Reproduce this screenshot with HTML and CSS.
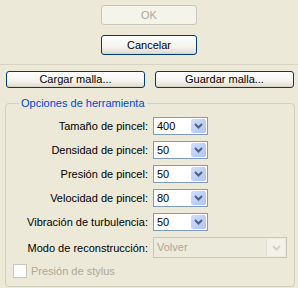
FILE: index.html
```html
<!DOCTYPE html>
<html>
<head>
<meta charset="utf-8">
<link rel="stylesheet" href="styles.css">
</head>
<body>
<div class="top">
  <button class="btn btn-disabled" disabled>OK</button>
  <button class="btn">Cancelar</button>
</div>
<div class="sep"></div>
<div class="mesh">
  <button class="btn btn-mesh">Cargar malla...</button>
  <button class="btn btn-mesh">Guardar malla...</button>
</div>
<fieldset class="group">
  <legend class="legend">Opciones de herramienta</legend>
  <div class="grid">
    <span class="lbl">Tamaño de pincel:</span>
    <div class="combo"><span class="val">400</span><span class="arrow"><svg width="9" height="6" viewBox="0 0 9 6"><path d="M1 1 L4.5 4.5 L8 1" fill="none" stroke="#4D6185" stroke-width="2"/></svg></span></div>
    <span class="lbl">Densidad de pincel:</span>
    <div class="combo"><span class="val">50</span><span class="arrow"><svg width="9" height="6" viewBox="0 0 9 6"><path d="M1 1 L4.5 4.5 L8 1" fill="none" stroke="#4D6185" stroke-width="2"/></svg></span></div>
    <span class="lbl">Presión de pincel:</span>
    <div class="combo"><span class="val">50</span><span class="arrow"><svg width="9" height="6" viewBox="0 0 9 6"><path d="M1 1 L4.5 4.5 L8 1" fill="none" stroke="#4D6185" stroke-width="2"/></svg></span></div>
    <span class="lbl">Velocidad de pincel:</span>
    <div class="combo"><span class="val">80</span><span class="arrow"><svg width="9" height="6" viewBox="0 0 9 6"><path d="M1 1 L4.5 4.5 L8 1" fill="none" stroke="#4D6185" stroke-width="2"/></svg></span></div>
    <span class="lbl">Vibración de turbulencia:</span>
    <div class="combo"><span class="val">50</span><span class="arrow"><svg width="9" height="6" viewBox="0 0 9 6"><path d="M1 1 L4.5 4.5 L8 1" fill="none" stroke="#4D6185" stroke-width="2"/></svg></span></div>
    <span class="lbl lbl-tall">Modo de reconstrucción:</span>
    <div class="combo combo-wide combo-disabled"><span class="val">Volver</span><span class="arrow"><svg width="9" height="6" viewBox="0 0 9 6"><path d="M1 1 L4.5 4.5 L8 1" fill="none" stroke="#D4D2C6" stroke-width="2"/></svg></span></div>
  </div>
  <div class="check">
    <span class="box"></span>
    <span class="check-lbl">Presión de stylus</span>
  </div>
</fieldset>
</body>
</html>
```
FILE: styles.css
```css
* { box-sizing: border-box; }
html, body {
  margin: 0;
  padding: 0;
}
body {
  width: 298px;
  height: 288px;
  overflow: hidden;
  background: #ECE9D8;
  font-family: "Liberation Sans", Arial, sans-serif;
  font-size: 11px;
  color: #000;
}
.top {
  display: flex;
  flex-direction: column;
  align-items: center;
  padding-top: 5px;
  gap: 10px;
}
.btn {
  font-family: "Liberation Sans", Arial, sans-serif;
  font-size: 11px;
  color: #000;
  border: 1px solid #003C74;
  border-radius: 3px;
  background: linear-gradient(#FFFFFF 0%, #F4F3EE 60%, #E4E1D6 90%, #D6D0C5 100%);
  padding: 0;
  margin: 0;
  line-height: 1;
}
.top .btn {
  width: 96px;
  height: 20px;
}
.btn-disabled {
  border-color: #C9C7BA;
  background: #F5F4EA;
  color: #ACA899;
}
.sep {
  margin-top: 9px;
  height: 1px;
  background: #D6D2C2;
}
.mesh {
  display: flex;
  gap: 10px;
  padding: 0 0 0 6px;
  margin-top: 6px;
}
.btn-mesh {
  width: 139px;
  height: 17px;
}
.group {
  margin: 9px 0 0 5px;
  width: 290px;
  height: 190px;
  border: 1px solid #D0D0BF;
  border-radius: 4px;
  padding: 7px 0 0 0;
}
.legend {
  margin-left: 13px;
  padding: 0 2px;
  color: #0046D5;
  line-height: 13px;
}
.grid {
  display: grid;
  grid-template-columns: 142px auto;
  grid-template-rows: repeat(5, 18px) 21px;
  column-gap: 5px;
  row-gap: 6px;
  justify-items: start;
  align-items: center;
}
.lbl {
  justify-self: end;
  white-space: nowrap;
}
.combo {
  width: 55px;
  height: 18px;
  border: 1px solid #7F9DB9;
  background: #fff;
  display: flex;
  align-items: stretch;
  justify-content: space-between;
  padding: 1px;
}
.val {
  padding-left: 2px;
  line-height: 14px;
}
.arrow {
  width: 15px;
  border-radius: 2px;
  background: linear-gradient(135deg, #D2DEFB 0%, #BCCEF8 60%, #B0C4F5 100%);
  display: flex;
  align-items: center;
  justify-content: center;
}
.combo-wide {
  width: 134px;
  height: 21px;
}
.combo-disabled {
  border-color: #C9C7BA;
  background: #EBEADB;
  color: #ACA899;
}
.combo-disabled .val {
  line-height: 17px;
}
.combo-disabled .arrow {
  width: 19px;
  border-radius: 0;
  background: #F3F2E8;
  border-left: 1px solid #E2E0D4;
}
.check {
  display: flex;
  align-items: center;
  gap: 4px;
  padding-left: 7px;
  margin-top: 6px;
}
.box {
  width: 14px;
  height: 14px;
  border: 1px solid #CAC8BB;
  background: #fff;
}
.check-lbl {
  color: #ACA899;
}
```
